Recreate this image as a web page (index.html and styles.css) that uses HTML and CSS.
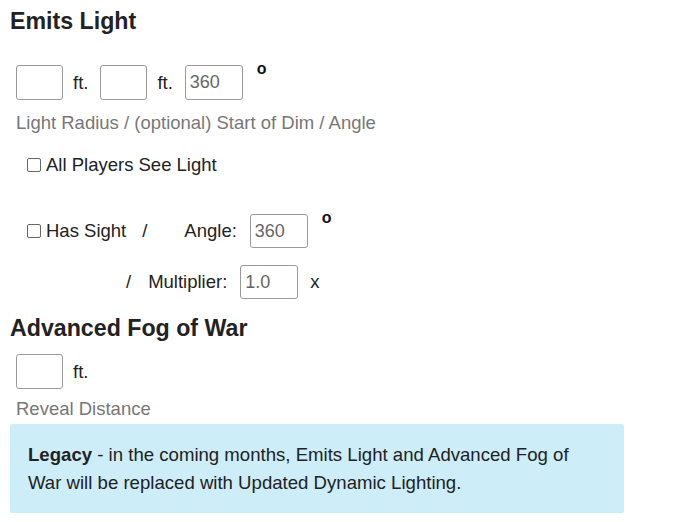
FILE: index.html
```html
<!DOCTYPE html>
<html>
<head>
<meta charset="utf-8">
<link rel="stylesheet" href="styles.css">
</head>
<body>
<div class="panel">
  <h3 class="title">Emits Light</h3>
  <div class="row input-row">
    <input class="field" type="text" value="">
    <span class="unit">ft.</span>
    <input class="field" type="text" value="">
    <span class="unit">ft.</span>
    <input class="field wide" type="text" value="360">
    <span class="deg">o</span>
  </div>
  <div class="hint">Light Radius / (optional) Start of Dim / Angle</div>
  <label class="check-row"><span class="box"></span>All Players See Light</label>
  <div class="row sight-row">
    <label class="check-inline"><span class="box"></span>Has Sight</label>
    <span class="slash">/</span>
    <span class="lbl angle-lbl">Angle:</span>
    <input class="field wide" type="text" value="360">
    <span class="deg">o</span>
  </div>
  <div class="row mult-row">
    <span class="slash">/</span>
    <span class="lbl mult-lbl">Multiplier:</span>
    <input class="field wide" type="text" value="1.0">
    <span class="times">x</span>
  </div>
  <h3 class="title title2">Advanced Fog of War</h3>
  <div class="row input-row fog-row">
    <input class="field" type="text" value="">
    <span class="unit">ft.</span>
  </div>
  <div class="hint hint2">Reveal Distance</div>
  <div class="alert"><b>Legacy</b> - in the coming months, Emits Light and Advanced Fog of War will be replaced with Updated Dynamic Lighting.</div>
</div>
</body>
</html>
```

FILE: styles.css
```css
* { box-sizing: border-box; }
html, body { margin: 0; padding: 0; background: #fff; }
body {
  font-family: "Liberation Sans", Arial, sans-serif;
  color: #222;
  font-size: 18.5px;
}
.panel {
  padding-left: 10px;
  width: 624px;
}
.title {
  margin: 0;
  padding-top: 8px;
  height: 34px;
  line-height: 26px;
  font-size: 23.2px;
  font-weight: bold;
  color: #222;
}
.row {
  display: flex;
  align-items: center;
  height: 35px;
}
.input-row {
  margin-top: 31px;
  margin-left: 6px;
}
.field {
  width: 47px;
  height: 35px;
  border: 1px solid #9a9a9a;
  border-radius: 3px;
  font-family: "Liberation Sans", Arial, sans-serif;
  font-size: 18px;
  color: #666;
  padding: 0 0 0 4px;
  margin: 0;
  background: #fff;
}
.field.wide { width: 58px; }
.unit {
  margin: 0 12px 0 10px;
  color: #222;
}
.deg {
  align-self: flex-start;
  margin-top: -5px;
  margin-left: 14px;
  font-size: 16px;
  font-weight: bold;
  color: #111;
}
.hint {
  margin-top: 13px;
  margin-left: 6px;
  line-height: 20px;
  color: #777;
}
.check-row, .check-inline {
  display: flex;
  align-items: center;
  line-height: 20px;
  color: #222;
}
.check-row {
  margin-top: 22px;
  margin-left: 17px;
}
.box {
  width: 14px;
  height: 14px;
  border: 1px solid #666;
  border-radius: 2px;
  margin-right: 5px;
  background: #fff;
}
.sight-row {
  margin-top: 39px;
  margin-left: 17px;
  height: 34px;
}
.sight-row .field { height: 34px; }
.slash { color: #222; }
.sight-row .slash { margin-left: 16px; }
.angle-lbl { margin-left: 37px; margin-right: 13px; }
.mult-row {
  margin-top: 17px;
  margin-left: 116px;
  height: 34px;
}
.mult-row .field { height: 34px; }
.mult-lbl { margin-left: 17px; margin-right: 13px; }
.times { margin-left: 12px; color: #222; }
.title2 {
  margin-top: 16px;
  padding-top: 0;
  height: 26px;
}
.fog-row { margin-top: 13px; }
.hint2 { margin-top: 10px; }
.alert {
  margin-top: 5px;
  background: #cdedf8;
  padding: 17px 40px 16px 18px;
  line-height: 28px;
  font-size: 18.6px;
  color: #222;
  border-radius: 2px;
}
.alert b { font-weight: bold; }
```
